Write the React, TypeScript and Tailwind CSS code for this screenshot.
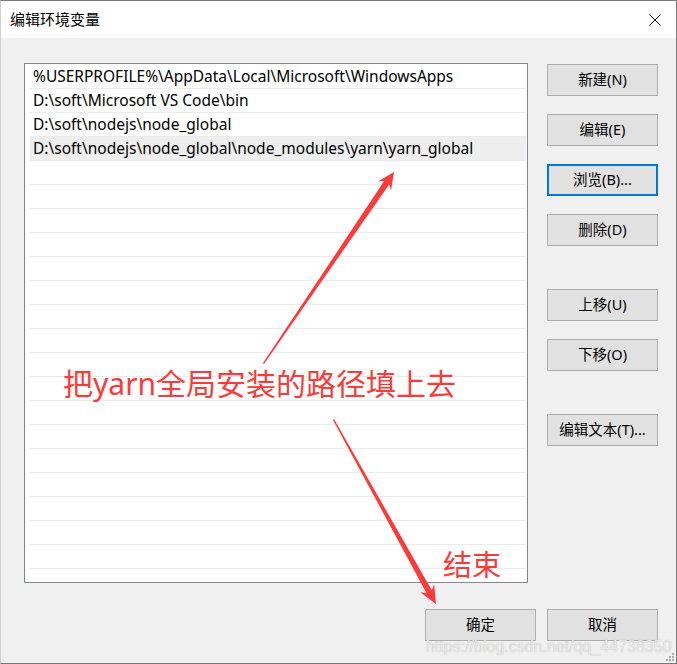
const paths = [
  "%USERPROFILE%\\AppData\\Local\\Microsoft\\WindowsApps",
  "D:\\soft\\Microsoft VS Code\\bin",
  "D:\\soft\\nodejs\\node_global",
  "D:\\soft\\nodejs\\node_global\\node_modules\\yarn\\yarn_global",
];

const font = "font-['Noto_Sans','Noto_Sans_CJK_SC',sans-serif]";

const Btn = ({ label, focused = false, className = "" }: { label: string; focused?: boolean; className?: string }) => (
  <button
    className={`w-[111px] h-[32px] bg-[#e1e1e1] text-[14.5px] text-black flex items-center justify-center ${
      focused ? "border-2 border-[#0078d7]" : "border border-[#adadad]"
    } ${className}`}
  >
    {label}
  </button>
);

export default function App() {
  const rows = Array.from({ length: 21 }, (_, i) => paths[i] ?? "");

  return (
    <div className={`relative w-[677px] h-[664px] bg-[#f0f0f0] border-t border-r border-b border-[#7a7a7a] border-l border-l-[#d0d0d0] overflow-hidden ${font}`}>
      {/* title bar */}
      <div className="h-[37px] bg-white flex items-center justify-between pl-[9px] pr-[15px]">
        <span className="text-[15px] text-black">编辑环境变量</span>
        <svg width="12" height="12" viewBox="0 0 12 12">
          <path d="M0.5 0.5 L11.5 11.5 M11.5 0.5 L0.5 11.5" stroke="#111" strokeWidth="1" />
        </svg>
      </div>

      {/* body */}
      <div className="flex pl-[23px] pt-[25px] gap-[19px]">
        <div className="w-[504px] h-[520px] bg-white border border-[#828790] pt-px pl-[5px] pr-[1px]">
          {rows.map((p, i) => (
            <div
              key={i}
              className={`h-[24px] border-b border-[#ebebeb] flex items-center pl-[3px] text-[15.5px] text-black ${
                i === 3 ? "bg-[#eeeeee]" : ""
              }`}
            >
              {p}
            </div>
          ))}
        </div>
        <div className="flex flex-col">
          <Btn label="新建(N)" className="mt-px" />
          <Btn label="编辑(E)" className="mt-[18px]" />
          <Btn label="浏览(B)..." focused className="mt-[18px]" />
          <Btn label="删除(D)" className="mt-[18px]" />
          <Btn label="上移(U)" className="mt-[43px]" />
          <Btn label="下移(O)" className="mt-[18px]" />
          <Btn label="编辑文本(T)..." className="mt-[43px]" />
        </div>
      </div>

      <div className="flex justify-end gap-[11px] pr-[18px] mt-[26px]">
        <Btn label="确定" />
        <Btn label="取消" />
      </div>

      {/* annotations */}
      <svg className="absolute left-0 top-0 pointer-events-none" width="677" height="664">
        <polygon
          fill="#fc3a3a"
          points="263,363 388.2,183.5 390.1,189.6 393,171 376.9,180.6 383.2,180.1 262,362"
        />
        <polygon
          fill="#fc3a3a"
          points="332,419 425.6,592.3 419.2,591.2 435,603 433.2,583.4 430.8,589.3 333,418"
        />
      </svg>
      <div className="absolute left-[62px] top-[363px] text-[30px] leading-[40px] text-[#fc3a3a]">
        把yarn全局安装的路径填上去
      </div>
      <div className="absolute left-[442px] top-[545px] text-[29px] leading-[38px] text-[#fc3a3a]">
        结束
      </div>
      <div className="absolute left-[425px] top-[636px] text-[16px] leading-[20px] font-['Liberation_Sans',sans-serif] text-white/70 [text-shadow:0_0_1px_#a8a8a8]">
        https://blog.csdn.net/qq_44738350
      </div>
      <div className="absolute right-[2px] bottom-[2px] grid grid-cols-3 gap-px w-[8px]">
        <span />
        <span />
        <span className="w-[2px] h-[2px] bg-[#aaa]" />
        <span />
        <span className="w-[2px] h-[2px] bg-[#aaa]" />
        <span className="w-[2px] h-[2px] bg-[#aaa]" />
        <span className="w-[2px] h-[2px] bg-[#aaa]" />
        <span className="w-[2px] h-[2px] bg-[#aaa]" />
        <span className="w-[2px] h-[2px] bg-[#aaa]" />
      </div>
    </div>
  );
}
